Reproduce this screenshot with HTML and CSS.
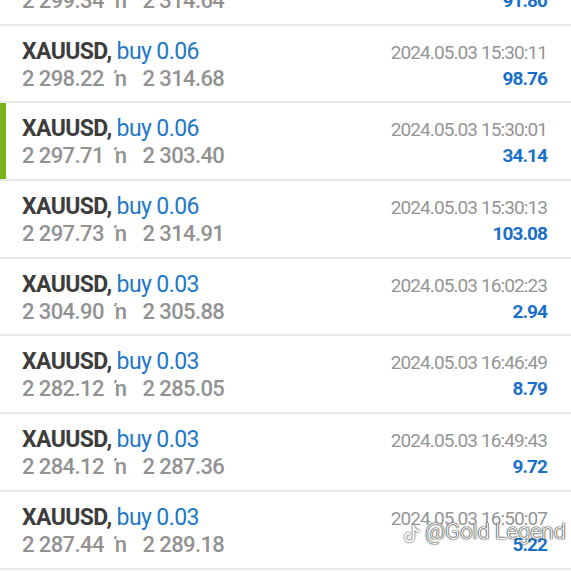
FILE: index.html
```html
<!DOCTYPE html>
<html>
	<head>
		<meta charset="utf-8">
		<title>History</title>
		<link rel="stylesheet" href="styles.css">
	</head>
	<body>
		<div class="deal_list">
			<div class="deal_row">
				<div class="deal_left">
					<div class="deal_title">XAUUSD, <span class="deal_type">buy 0.06</span></div>
					<div class="deal_price">2 299.34<span class="deal_arrow">ŉ</span>2 314.64</div>
				</div>
				<div class="deal_right">
					<div class="deal_time">2024.05.03 15:30:07</div>
					<div class="deal_profit">91.80</div>
				</div>
			</div>
			<div class="deal_row">
				<div class="deal_left">
					<div class="deal_title">XAUUSD, <span class="deal_type">buy 0.06</span></div>
					<div class="deal_price">2 298.22<span class="deal_arrow">ŉ</span>2 314.68</div>
				</div>
				<div class="deal_right">
					<div class="deal_time">2024.05.03 15:30:11</div>
					<div class="deal_profit">98.76</div>
				</div>
			</div>
			<div class="deal_row deal_active">
				<div class="deal_left">
					<div class="deal_title">XAUUSD, <span class="deal_type">buy 0.06</span></div>
					<div class="deal_price">2 297.71<span class="deal_arrow">ŉ</span>2 303.40</div>
				</div>
				<div class="deal_right">
					<div class="deal_time">2024.05.03 15:30:01</div>
					<div class="deal_profit">34.14</div>
				</div>
			</div>
			<div class="deal_row">
				<div class="deal_left">
					<div class="deal_title">XAUUSD, <span class="deal_type">buy 0.06</span></div>
					<div class="deal_price">2 297.73<span class="deal_arrow">ŉ</span>2 314.91</div>
				</div>
				<div class="deal_right">
					<div class="deal_time">2024.05.03 15:30:13</div>
					<div class="deal_profit">103.08</div>
				</div>
			</div>
			<div class="deal_row">
				<div class="deal_left">
					<div class="deal_title">XAUUSD, <span class="deal_type">buy 0.03</span></div>
					<div class="deal_price">2 304.90<span class="deal_arrow">ŉ</span>2 305.88</div>
				</div>
				<div class="deal_right">
					<div class="deal_time">2024.05.03 16:02:23</div>
					<div class="deal_profit">2.94</div>
				</div>
			</div>
			<div class="deal_row">
				<div class="deal_left">
					<div class="deal_title">XAUUSD, <span class="deal_type">buy 0.03</span></div>
					<div class="deal_price">2 282.12<span class="deal_arrow">ŉ</span>2 285.05</div>
				</div>
				<div class="deal_right">
					<div class="deal_time">2024.05.03 16:46:49</div>
					<div class="deal_profit">8.79</div>
				</div>
			</div>
			<div class="deal_row">
				<div class="deal_left">
					<div class="deal_title">XAUUSD, <span class="deal_type">buy 0.03</span></div>
					<div class="deal_price">2 284.12<span class="deal_arrow">ŉ</span>2 287.36</div>
				</div>
				<div class="deal_right">
					<div class="deal_time">2024.05.03 16:49:43</div>
					<div class="deal_profit">9.72</div>
				</div>
			</div>
			<div class="deal_row">
				<div class="deal_left">
					<div class="deal_title">XAUUSD, <span class="deal_type">buy 0.03</span></div>
					<div class="deal_price">2 287.44<span class="deal_arrow">ŉ</span>2 289.18</div>
				</div>
				<div class="deal_right">
					<div class="deal_time">2024.05.03 16:50:07</div>
					<div class="deal_profit">5.22</div>
				</div>
			</div>
		</div>
		<!-- 水印 -->
		<div class="watermark">
			<svg class="watermark_icon" width="18" height="20" viewBox="0 0 18 20">
				<path d="M9.5 2v11.5a4 4 0 1 1-4-4M9.5 2c.5 2.9 2.7 4.9 5.6 5.1" fill="none" stroke="#fff" stroke-width="1.8" stroke-linecap="round" stroke-linejoin="round"/>
			</svg>
			<span>@Gold Legend</span>
		</div>
	</body>
</html>
```
FILE: styles.css
```css
html, body {
	margin: 0;
	background: #fff;
	font-family: Roboto, "Liberation Sans", sans-serif;
	overflow: hidden;
}

.deal_list {
	margin-top: -52px;
}

.deal_row {
	display: flex;
	justify-content: space-between;
	height: 75.7px;
	padding: 0 24px 0 22px;
	border-bottom: 2px solid #e8e8e8;
	box-sizing: content-box;
	position: relative;
}

.deal_active::before {
	content: "";
	position: absolute;
	left: 0;
	top: 0;
	bottom: 0;
	width: 6px;
	background: #7ab317;
}

.deal_left {
	padding-top: 12px;
}

.deal_title {
	font-size: 23px;
	font-weight: bold;
	color: #3d3d3d;
	letter-spacing: -0.6px;
	line-height: 27px;
}

.deal_type {
	font-weight: normal;
	color: #1e78c8;
}

.deal_price {
	font-size: 22px;
	font-weight: 500;
	color: #929292;
	letter-spacing: -0.6px;
	line-height: 27px;
}

.deal_arrow {
	margin: 0 16px 0 11px;
}

.deal_right {
	display: flex;
	flex-direction: column;
	align-items: flex-end;
	padding-top: 15px;
}

.deal_time {
	font-size: 19px;
	color: #959595;
	letter-spacing: -0.9px;
	line-height: 24px;
}

.deal_profit {
	font-size: 19px;
	font-weight: bold;
	color: #1a6fc9;
	letter-spacing: -0.9px;
	line-height: 28px;
}

.watermark {
	position: absolute;
	left: 404px;
	top: 519px;
	display: flex;
	align-items: center;
	gap: 3px;
	white-space: nowrap;
	font-size: 22px;
	font-weight: 300;
	color: #fff;
	text-shadow: 0 0 1px #222, 0 0 1px #222, 0 0 2px #555;
}

.watermark_icon {
	margin-top: 4px;
	filter: drop-shadow(0 0 1px #222);
}
```
